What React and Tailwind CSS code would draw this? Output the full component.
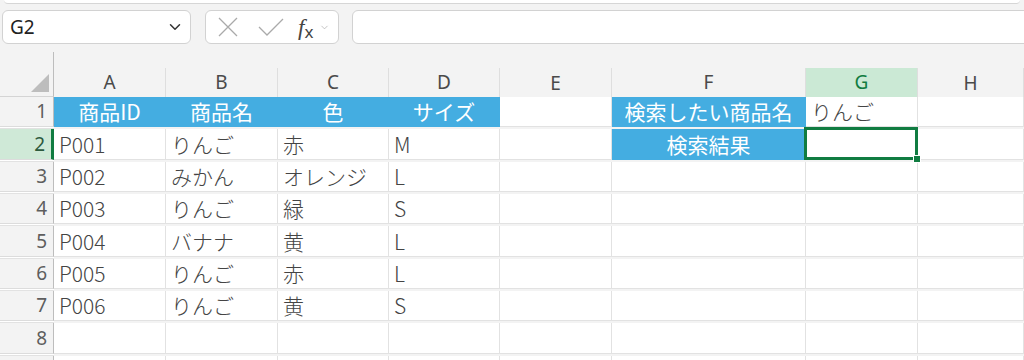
import React from "react"
import { ChevronDown } from "lucide-react"

const COLS = ["A", "B", "C", "D", "E", "F", "G", "H"]
const GRID = "grid grid-cols-[54px_112px_112px_111px_111px_112px_194px_112px_106px]"

const ROWS = [
  ["商品ID", "商品名", "色", "サイズ", "", "検索したい商品名", "りんご", ""],
  ["P001", "りんご", "赤", "M", "", "検索結果", "", ""],
  ["P002", "みかん", "オレンジ", "L", "", "", "", ""],
  ["P003", "りんご", "緑", "S", "", "", "", ""],
  ["P004", "バナナ", "黄", "L", "", "", "", ""],
  ["P005", "りんご", "赤", "L", "", "", "", ""],
  ["P006", "りんご", "黄", "S", "", "", "", ""],
  ["", "", "", "", "", "", "", ""],
  ["", "", "", "", "", "", "", ""],
]

// cells with the blue header fill
const isBlue = (r, c) => (r === 0 && c <= 3) || (c === 5 && r <= 1)
const blueHead = (c) => c <= 3 || c === 5

function Toolbar() {
  return (
    <div className="h-[68px] flex flex-col">
      <div className="mx-[4px] h-[4px] bg-white border-b border-[#d6d6d6] rounded-b-[6px]" />
      <div className="flex items-center mt-[6px] h-[34px]">
        <div className="ml-[2px] w-[189px] h-full bg-white border border-[#d2d2d2] rounded-[6px] flex items-center justify-between pl-[7px] pr-[6px]">
          <span className="text-[19px] text-[#222] font-['Noto_Sans',sans-serif]">G2</span>
          <ChevronDown size={18} strokeWidth={2} className="text-[#333]" />
        </div>
        <div className="ml-[14px] w-[134px] h-full bg-white border border-[#d2d2d2] rounded-[6px] flex items-center pl-[12px]">
          <svg width="20" height="20" viewBox="0 0 20 20" className="text-[#aaa]">
            <path d="M1 1L19 19M19 1L1 19" stroke="currentColor" strokeWidth="1.3" fill="none" />
          </svg>
          <svg width="26" height="18" viewBox="0 0 26 18" className="ml-[20px] text-[#aaa]">
            <path d="M1 9L9 17L25 1" stroke="currentColor" strokeWidth="1.3" fill="none" />
          </svg>
          <span className="ml-[14px] text-[#444] font-['Liberation_Serif',serif] italic text-[23px] leading-none">
            f<span className="text-[17px] not-italic font-['Noto_Sans',sans-serif] relative top-[3px]">x</span>
          </span>
          <ChevronDown size={11} strokeWidth={1.5} className="text-[#aaa] ml-[6px]" />
        </div>
        <div className="ml-[13px] flex-1 -mr-[8px] h-full bg-white border border-[#d2d2d2] rounded-[6px]" />
      </div>
    </div>
  )
}

function ColumnHeader() {
  return (
    <div className={`${GRID} h-[29px] -mt-[16px]`}>
      <div className="relative -mt-[16px] h-[45px] border-r border-[#bdbdbd] border-b border-b-[#d4d4d4]">
        <svg className="absolute right-[4px] bottom-[4px]" width="18" height="18" viewBox="0 0 18 18">
          <polygon points="18,0 18,18 0,18" fill="#bdbdbd" />
        </svg>
      </div>
      {COLS.map((c, i) => {
        const sel = c === "G"
        return (
          <div
            key={c}
            className={`flex items-center justify-center text-[19px] font-['Noto_Sans',sans-serif] border-r border-[#dedede] ${
              sel
                ? "bg-[#cbe9d5] text-[#107c41] border-b-2 border-b-[#107c41]"
                : blueHead(i)
                ? "text-[#4a4a4a] border-b-2 border-b-[#44ade1]"
                : "text-[#4a4a4a] border-b border-b-[#d4d4d4]"
            }`}
          >
            {c}
          </div>
        )
      })}
      <div className="border-b border-[#d4d4d4]" />
    </div>
  )
}

function Row({ cells, r }) {
  const selRow = r === 1
  return (
    <div className={`${GRID} h-[32.33px]`}>
      <div
        className={`flex items-center justify-end pr-[6px] text-[19px] font-['Noto_Sans',sans-serif] border-b border-[#dcdcdc] ${
          selRow
            ? "bg-[#cfe9d7] text-[#2d5a3d] border-r-[3px] border-r-[#107c41]"
            : "bg-[#f3f3f3] text-[#5e5e5e] border-r border-r-[#bdbdbd]"
        }`}
      >
        {r < 8 ? r + 1 : ""}
      </div>
      {cells.map((v, c) => {
        const blue = isBlue(r, c)
        const selCell = r === 1 && c === 6
        return (
          <div
            key={c}
            className={`relative flex items-center whitespace-nowrap text-[21px] leading-none font-['Noto_Sans_CJK_JP',sans-serif] border-r border-b ${
              selCell ? "z-10" : ""
            } ${
              blue
                ? "bg-[#44ade1] border-[#44ade1] text-white justify-center font-normal"
                : "bg-white border-[#e2e2e2] text-[#444] pl-[5px] font-light"
            }`}
          >
            {v}
            {selCell && (
              <>
                <div className="absolute -top-[2px] -left-[2px] -right-[1px] -bottom-[1px] border-[3px] border-[#107c41]" />
                <div className="absolute -right-[4px] -bottom-[4px] w-[8px] h-[8px] bg-[#107c41] border border-white" />
              </>
            )}
          </div>
        )
      })}
      <div className="bg-white border-b border-[#e2e2e2]" />
    </div>
  )
}

export default function App() {
  return (
    <div className="w-[1024px] h-[360px] overflow-hidden bg-[#f3f3f3]">
      <Toolbar />
      <div className="mt-[16px]">
        <ColumnHeader />
        {ROWS.map((cells, r) => (
          <Row key={r} cells={cells} r={r} />
        ))}
      </div>
    </div>
  )
}
